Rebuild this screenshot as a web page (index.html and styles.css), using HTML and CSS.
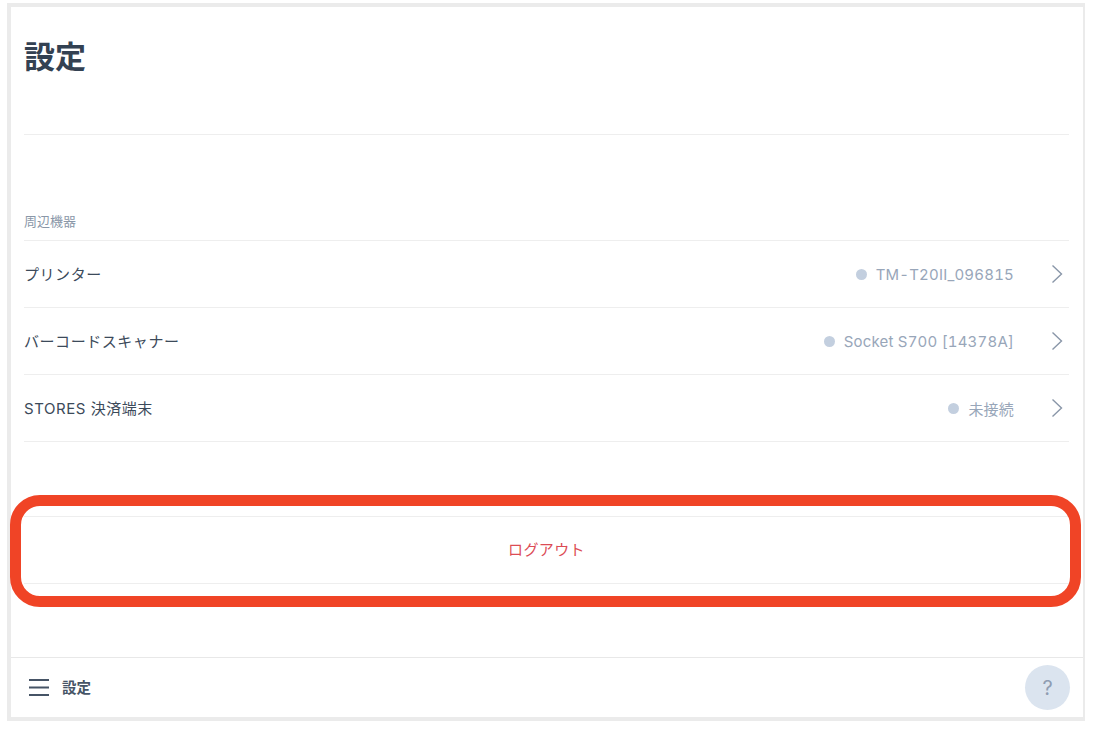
FILE: index.html
```html
<!DOCTYPE html>
<html lang="ja">
<head>
<meta charset="utf-8">
<title>設定</title>
<link rel="stylesheet" href="styles.css">
</head>
<body>
<div class="frame">
  <main class="content">
    <header class="page-head"><h1 class="page-title">設定</h1></header>
    <section class="devices">
      <h2 class="section-label">周辺機器</h2>
      <ul class="rows">
        <li class="row">
          <span class="row-name">プリンター</span>
          <span class="row-status"><i class="dot"></i>TM-T20II_096815</span>
          <svg class="chevron" viewBox="0 0 12 20"><path d="M1.5 1.500 10.500 10 1.500 18.500"/></svg>
        </li>
        <li class="row">
          <span class="row-name">バーコードスキャナー</span>
          <span class="row-status"><i class="dot"></i>Socket S700 [14378A]</span>
          <svg class="chevron" viewBox="0 0 12 20"><path d="M1.5 1.500 10.500 10 1.500 18.500"/></svg>
        </li>
        <li class="row">
          <span class="row-name">STORES 決済端末</span>
          <span class="row-status"><i class="dot"></i>未接続</span>
          <svg class="chevron" viewBox="0 0 12 20"><path d="M1.5 1.500 10.500 10 1.500 18.500"/></svg>
        </li>
      </ul>
    </section>
    <div class="logout">ログアウト</div>
  </main>
  <footer class="bottom-bar">
    <svg class="menu-icon" viewBox="0 0 20 17"><path d="M0 1h20M0 8.500h20M0 16h20"/></svg>
    <span class="bottom-title">設定</span>
    <span class="help">?</span>
  </footer>
  <div class="highlight"></div>
</div>
</body>
</html>
```
FILE: styles.css
```css
* { box-sizing: border-box; }
html, body { margin: 0; height: 100%; background: #fff; }
body {
  padding: 3px 0 0 7px;
  font-family: "Inter", "Noto Sans CJK JP", sans-serif;
  color: #3c4a5a;
  overflow: hidden;
}
.frame {
  position: relative;
  width: 1078px;
  height: 718px;
  border: solid #ebebeb;
  border-width: 4px 2px 4px 4px;
  display: flex;
  flex-direction: column;
  background: #fff;
}
.content { flex: 1; padding: 0 14px 0 13px; }
.page-head {
  height: 128px;
  border-bottom: 1px solid #eeeeee;
  padding-top: 25px;
}
.page-title {
  margin: 0;
  font: 700 31px/46px "Noto Sans CJK JP", sans-serif;
  color: #334152;
}
.devices { margin-top: 76px; }
.section-label {
  margin: 0;
  height: 29px;
  font: 400 13px/19px "Noto Sans CJK JP", sans-serif;
  color: #8a97a8;
}
.rows { list-style: none; margin: 0; padding: 0; border-top: 1px solid #eeeeee; }
.row {
  display: flex;
  align-items: center;
  height: 67px;
  border-bottom: 1px solid #eeeeee;
  font-size: 15px;
  letter-spacing: .55px;
}
.row-name { flex: 1; padding-bottom: 2px; color: #3c4a5a; }
.row-status { display: flex; align-items: center; letter-spacing: .2px; font-variant-numeric: tabular-nums; color: #98a6b9; }
.dot {
  width: 11px;
  height: 11px;
  margin-right: 9px;
  border-radius: 50%;
  background: #c3cfdf;
}
.chevron {
  width: 12px;
  height: 20px;
  margin: 0 6px 0 37px;
  fill: none;
  stroke: #8996a8;
  stroke-width: 1.4;
}
.logout {
  margin-top: 74px;
  height: 68px;
  display: flex;
  align-items: center;
  justify-content: center;
  padding-bottom: 4px;
  border-top: 1px solid #eeeeee;
  border-bottom: 1px solid #eeeeee;
  font-size: 15px;
  letter-spacing: .4px;
  color: #dc4c55;
}
.bottom-bar {
  height: 60px;
  display: flex;
  align-items: center;
  padding: 0 13px 0 18px;
  border-top: 1px solid #e8e8e8;
}
.menu-icon {
  width: 20px;
  height: 17px;
  margin-right: 13px;
  fill: none;
  stroke: #465466;
  stroke-width: 2;
}
.bottom-title {
  flex: 1;
  padding-bottom: 2px;
  font: 700 14.500px/20px "Noto Sans CJK JP", sans-serif;
  color: #465466;
}
.help {
  width: 45px;
  height: 45px;
  border-radius: 50%;
  background: #dbe4ef;
  color: #8f9db2;
  display: flex;
  align-items: center;
  justify-content: center;
  font-size: 20px;
}
.highlight {
  position: absolute;
  left: -1px;
  top: 488px;
  width: 1071px;
  height: 112px;
  border: 11px solid #f04426;
  border-radius: 30px;
}
```
